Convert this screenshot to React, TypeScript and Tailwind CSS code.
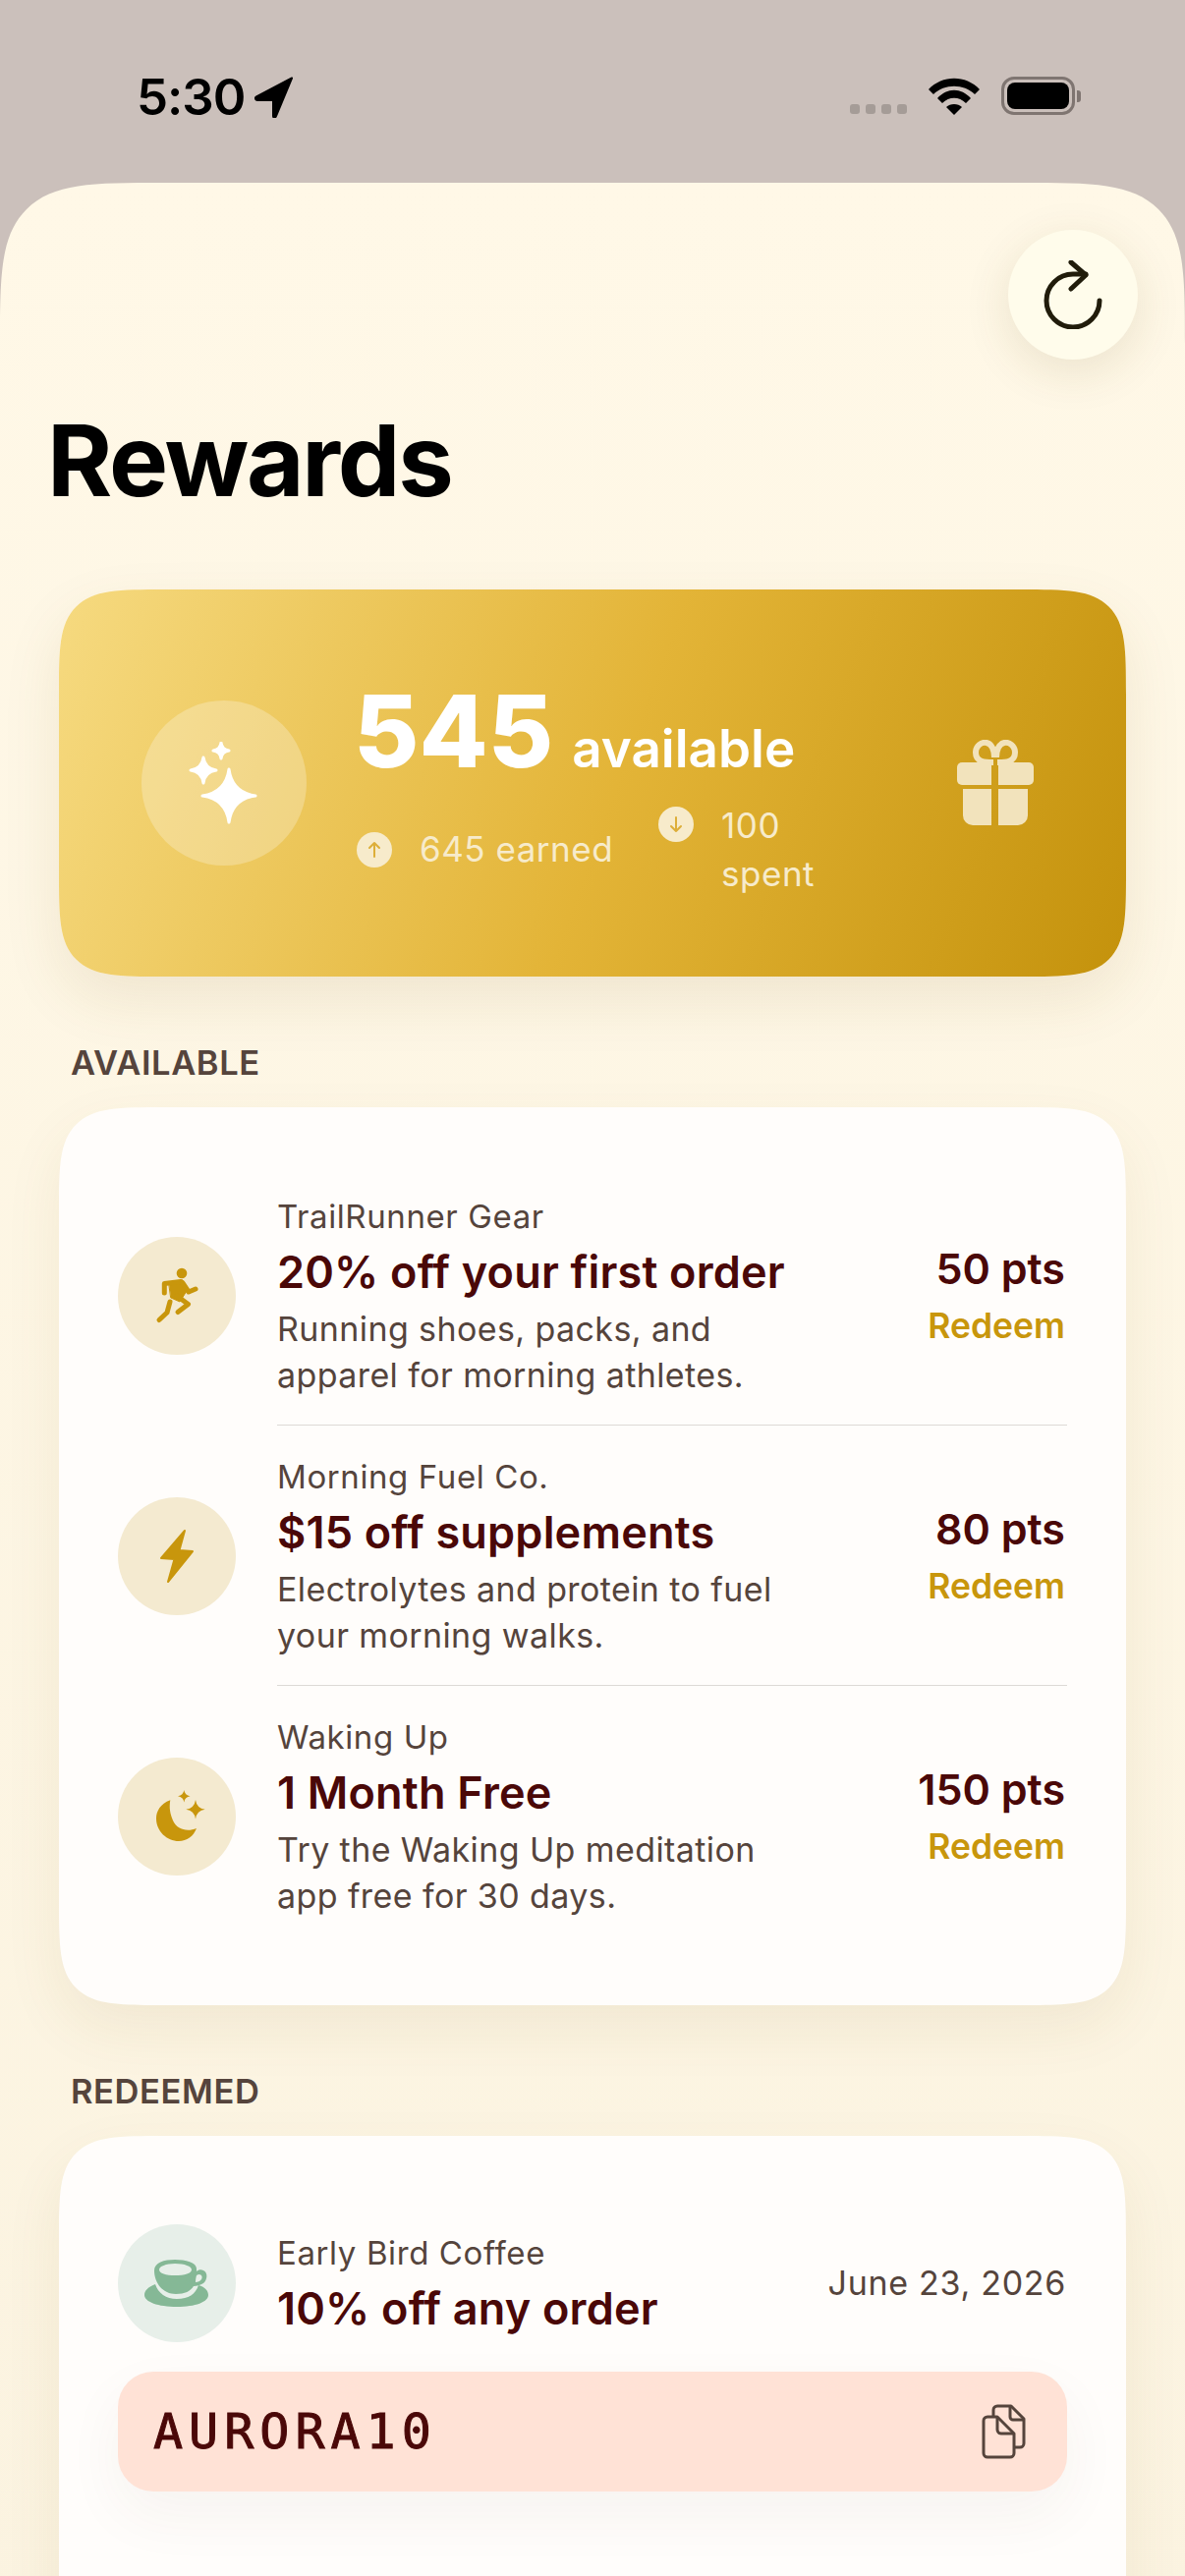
import React from "react";

const font = { fontFamily: "Inter, 'Noto Sans', sans-serif" };

const offers = [
  {
    brand: "TrailRunner Gear",
    title: "20% off your first order",
    desc: ["Running shoes, packs, and", "apparel for morning athletes."],
    pts: "50 pts",
    icon: "run",
  },
  {
    brand: "Morning Fuel Co.",
    title: "$15 off supplements",
    desc: ["Electrolytes and protein to fuel", "your morning walks."],
    pts: "80 pts",
    icon: "bolt",
  },
  {
    brand: "Waking Up",
    title: "1 Month Free",
    desc: ["Try the Waking Up meditation", "app free for 30 days."],
    pts: "150 pts",
    icon: "moon",
  },
];

const star = (cx: number, cy: number, r: number) => {
  const k = r * 0.12;
  return `M${cx} ${cy - r}Q${cx + k} ${cy - k} ${cx + r} ${cy}Q${cx + k} ${cy + k} ${cx} ${cy + r}Q${cx - k} ${cy + k} ${cx - r} ${cy}Q${cx - k} ${cy - k} ${cx} ${cy - r}Z`;
};

const Sparkles = () => (
  <svg width="72" height="84" viewBox="0 0 72 84" fill="#fff" stroke="#fff" strokeWidth="3" strokeLinejoin="round">
    <path d={star(41, 55, 27)} />
    <path d={star(15, 29, 13)} />
    <path d={star(33, 9, 8)} />
  </svg>
);

const Gift = () => (
  <svg width="80" height="88" viewBox="0 0 80 88" fill="#F2E3BC">
    <path d="M38 23C30 23 20 23 20 13 20 6 26 2 31 3 36 4 39 10 39 18M42 23C50 23 60 23 60 13 60 6 54 2 49 3 44 4 41 10 41 18" fill="none" stroke="#F2E3BC" strokeWidth="6" />
    <path d="M6 23H36V46H6A5 5 0 0 1 1 41V28A5 5 0 0 1 6 23Z" />
    <path d="M43 23H74A5 5 0 0 1 79 28V41A5 5 0 0 1 74 46H43Z" />
    <path d="M7 50H36V87H17A10 10 0 0 1 7 77Z" />
    <path d="M43 50H73V77A10 10 0 0 1 63 87H43Z" />
  </svg>
);

const Arrow = ({ down }: { down?: boolean }) => (
  <div className={`flex h-[36px] w-[36px] shrink-0 items-center justify-center rounded-full bg-[#F7EBCB] ${down ? "mt-[5px]" : ""}`}>
    <svg width="20" height="20" viewBox="0 0 20 20" fill="none" stroke="#DDAE38" strokeWidth="2" strokeLinecap="round" strokeLinejoin="round" className={down ? "rotate-180" : ""}>
      <path d="M10 17V3M5 8l5-5 5 5" />
    </svg>
  </div>
);

const OfferIcon = ({ name }: { name: string }) => {
  if (name === "run")
    return (
      <svg width="60" height="60" viewBox="20 20 60 60" fill="none" stroke="#C8960C" strokeWidth="5" strokeLinecap="round" strokeLinejoin="round">
        <circle cx="55" cy="27" r="5.300" fill="#C8960C" stroke="none" />
        <path d="M42 37 56 34 60 45 53 56 44 52Z" fill="#C8960C" strokeWidth="1" />
        <path d="M37.300 47V37.500L54 35.500" />
        <path d="M56 37 62 46 69 43" />
        <path d="M50 50 61.500 58.500 51 66.500" />
        <path d="M43 56 40 67 32 74.500" />
      </svg>
    );
  if (name === "bolt")
    return (
      <svg width="36" height="56" viewBox="0 0 36 56" fill="#C8960C" stroke="#C8960C" strokeWidth="2" strokeLinejoin="round">
        <path d="M26 2 2 30 15.500 31 9 54 34 23 20.500 22Z" />
      </svg>
    );
  return (
    <svg width="60" height="60" viewBox="20 20 60 60" fill="#C8960C">
      <path d="M43.300 33.300C33 37 29 45 29 52 29 65 40 75 52 75 60 75 67 70 70 62 60 66 50 63 46 54 43 47 42 41 43.300 33.300Z" />
      <path d={star(69, 42.700, 9.700)} />
      <path d={star(57.300, 29.300, 6.300)} />
    </svg>
  );
};

const Cup = () => (
  <svg width="66" height="50" viewBox="0 0 66 50" fill="#85B896">
    <path d="M11 26C3 29 0 33 0 37 0 44 14 49 33 49 52 49 65 44 65 37 65 33 62 29 55 27 52 36 45 41 33 41 22 41 14 35 11 26Z" />
    <path fillRule="evenodd" d="M10 12C10 4 20 1 31 1 42 1 53 4 53 10 53 11 53 12 53 13 55 11 58 11 60 12 65 14 64 22 60 25 57 27 53 28 50 28 47 33 41 36 32 36 19 36 10 25 10 12ZM31 5C22 5 15 8 15 11 15 15 22 17 31 17 41 17 48 15 48 11 48 8 41 5 31 5ZM53 17C52.500 19 52 21 52 24 54 24 57 23 58 21 60 18 57 14 53 17Z" />
  </svg>
);

const Copy = () => (
  <svg width="47" height="58" viewBox="18 16 47 58" fill="none" stroke="#55443C" strokeWidth="3" strokeLinejoin="round">
    <path d="M31 29V23A4 4 0 0 1 35 19H49L62 32V57A4 4 0 0 1 58 61H53" />
    <path d="M48 19V30A3 3 0 0 0 51 33H62" />
    <path d="M25 30H35L52 47V67A4 4 0 0 1 48 71H25A4 4 0 0 1 21 67V34A4 4 0 0 1 25 30Z" />
    <path d="M35 30V43A4 4 0 0 0 39 47H52" />
  </svg>
);

const SectionLabel = ({ children }: { children: React.ReactNode }) => (
  <div className="pl-[72px] text-[34.500px] leading-[40px] font-semibold tracking-[0.6px] text-[#55443C]">{children}</div>
);

export default function App() {
  return (
    <div className="flex h-[2622px] w-[1206px] flex-col overflow-hidden bg-[#CBC0BB]" style={font}>
      {/* status bar */}
      <div className="flex h-[186px] shrink-0 items-start justify-between pt-[68px] pr-[106px] pl-[139px]">
        <div className="flex items-center gap-[10px]">
          <span className="text-[51px] leading-[62px] font-semibold tracking-[-1px] text-black">5:30</span>
          <svg width="40" height="42" viewBox="0 0 40 42">
            <path d="M38 1.500 2 20.500C0 21.500 1 24 3 24H19V40C19 42 21.500 42 22 40Z" fill="#000" stroke="#000" strokeWidth="2" strokeLinejoin="round" />
          </svg>
        </div>
        <div className="-mt-[2px] flex items-center gap-[22px] pt-[12px]">
          <div className="flex gap-[6px] pt-[26px]">
            {[0, 1, 2, 3].map((i) => (
              <div key={i} className="h-[10px] w-[10px] rounded-[3px] bg-[#A59C97]" />
            ))}
          </div>
          <svg width="52" height="38" viewBox="0 0 52 38">
            <path d="M0 12C14-3 38-3 52 12L47 17C36 6 16 6 5 17Z" />
            <path d="M9 21C19 10 33 10 43 21L38 26C31 19 21 19 14 26Z" />
            <path d="M18 30C22 26 30 26 34 30L26 38Z" />
          </svg>
          <div className="flex items-center gap-[2px]">
            <div className="h-[39px] w-[75px] rounded-[13px] border-[3px] border-[#7F7571] p-[3px]">
              <div className="h-full w-full rounded-[8px] bg-black" />
            </div>
            <div className="h-[12px] w-[4px] rounded-r-[3px] bg-[#7F7571]" />
          </div>
        </div>
      </div>

      {/* sheet */}
      <div className="relative flex-1 rounded-t-[170px] bg-gradient-to-b from-[#FFF8E7] to-[#FBF3E0] [corner-shape:squircle]">
        <button className="absolute top-[48px] right-[48px] flex h-[132px] w-[132px] items-center justify-center rounded-full bg-[#FFFCEB] shadow-[0_12px_48px_rgba(90,70,20,0.12)]">
          <svg width="60" height="70" viewBox="0 0 60 70" fill="none" stroke="#211C0B" strokeWidth="5" strokeLinecap="round" strokeLinejoin="round">
            <path d="M28 2 43 15 28 29" />
            <path d="M57 41A27 27 0 1 1 30 14H43" />
          </svg>
        </button>

        <h1 className="pt-[226px] pl-[48px] text-[101px] leading-[112px] font-bold tracking-[-2.200px] text-black">Rewards</h1>

        {/* balance card */}
        <div className="mx-[60px] mt-[76px] flex h-[394px] items-center rounded-[110px] bg-[linear-gradient(110deg,#F6DA80_0%,#E3B437_52%,#C4920C_100%)] pr-[93px] pl-[84px] shadow-[0_24px_60px_rgba(120,90,20,0.1)] [corner-shape:squircle]">
          <div className="flex h-[168px] w-[168px] shrink-0 items-center justify-center rounded-full bg-white/25">
            <Sparkles />
          </div>
          <div className="ml-[48px] flex-1 pt-[8px]">
            <div className="flex items-baseline gap-[19px] text-white">
              <span className="text-[102px] leading-[110px] font-extrabold">545</span>
              <span className="text-[53px] leading-[60px] font-semibold">available</span>
            </div>
            <div className="mt-[17px] flex items-center gap-[46px] pl-[3px] text-[35px] leading-[49px] tracking-[0.5px] text-[#F7EBCB]">
              <div className="flex items-center gap-[28px]">
                <Arrow />
                <span>645 earned</span>
              </div>
              <div className="flex items-start gap-[28px]">
                <Arrow down />
                <span className="w-[100px]">100 spent</span>
              </div>
            </div>
          </div>
          <Gift />
        </div>

        <div className="mt-[68px]">
          <SectionLabel>AVAILABLE</SectionLabel>
        </div>

        <div className="mx-[60px] mt-[25px] h-[914px] rounded-[110px] bg-[#FFFDFB] pt-[59px] pr-[60px] pl-[60px] shadow-[0_24px_60px_rgba(120,90,20,0.08)] [corner-shape:squircle]">
          {offers.map((o, i) => (
            <div key={o.brand} className="flex h-[265px] items-start">
              <div className="mt-[73px] flex h-[120px] w-[120px] shrink-0 items-center justify-center rounded-full bg-[#F4EAD0]">
                <OfferIcon name={o.icon} />
              </div>
              <div className={`ml-[42px] flex h-[265px] flex-1 justify-between border-b pt-[30px] ${i < 2 ? "border-[#DDDAD6]" : "border-transparent"}`}>
                <div className="text-[#55443C]">
                  <div className="text-[33px] leading-[44px] tracking-[0.6px]">{o.brand}</div>
                  <div className="mt-[7px] text-[45px] leading-[56px] font-semibold tracking-[0.2px] text-[#4A0808]">{o.title}</div>
                  <div className="mt-[6px] text-[34px] leading-[47px] tracking-[0.4px]">
                    {o.desc.map((d) => (
                      <div key={d}>{d}</div>
                    ))}
                  </div>
                </div>
                <div className="pt-[49px] pr-[2px] text-right">
                  <div className="text-[43px] leading-[52px] font-semibold text-[#4A0808]">{o.pts}</div>
                  <div className="mt-[10px] text-[35.500px] leading-[46px] font-semibold text-[#C8960C]">Redeem</div>
                </div>
              </div>
            </div>
          ))}
        </div>

        <div className="mt-[68px]">
          <SectionLabel>REDEEMED</SectionLabel>
        </div>

        <div className="mx-[60px] mt-[25px] h-[560px] rounded-[110px] bg-[#FFFDFB] px-[60px] pt-[90px] shadow-[0_24px_60px_rgba(120,90,20,0.08)] [corner-shape:squircle]">
          <div className="flex h-[120px] items-center">
            <div className="flex h-[120px] w-[120px] shrink-0 items-center justify-center rounded-full bg-[#E7EFE9]">
              <Cup />
            </div>
            <div className="ml-[42px] flex-1">
              <div className="text-[33px] leading-[44px] tracking-[0.6px] text-[#55443C]">Early Bird Coffee</div>
              <div className="mt-[7px] text-[45px] leading-[56px] font-semibold tracking-[0.2px] text-[#4A0808]">10% off any order</div>
            </div>
            <div className="pr-[1px] text-[34px] leading-[44px] tracking-[0.7px] text-[#55443C]">June 23, 2026</div>
          </div>
          <div className="mt-[30px] flex h-[122px] items-center justify-between rounded-[36px] bg-[#FFE2D6] pr-[41px] pl-[36px] shadow-[0_24px_60px_rgba(80,60,40,0.05)]">
            <span className="text-[50px] tracking-[6px] text-[#4A0808] [-webkit-text-stroke:1px_#4A0808]" style={{ fontFamily: "'DejaVu Sans Mono', monospace" }}>AURORA10</span>
            <Copy />
          </div>
        </div>
      </div>
    </div>
  );
}
